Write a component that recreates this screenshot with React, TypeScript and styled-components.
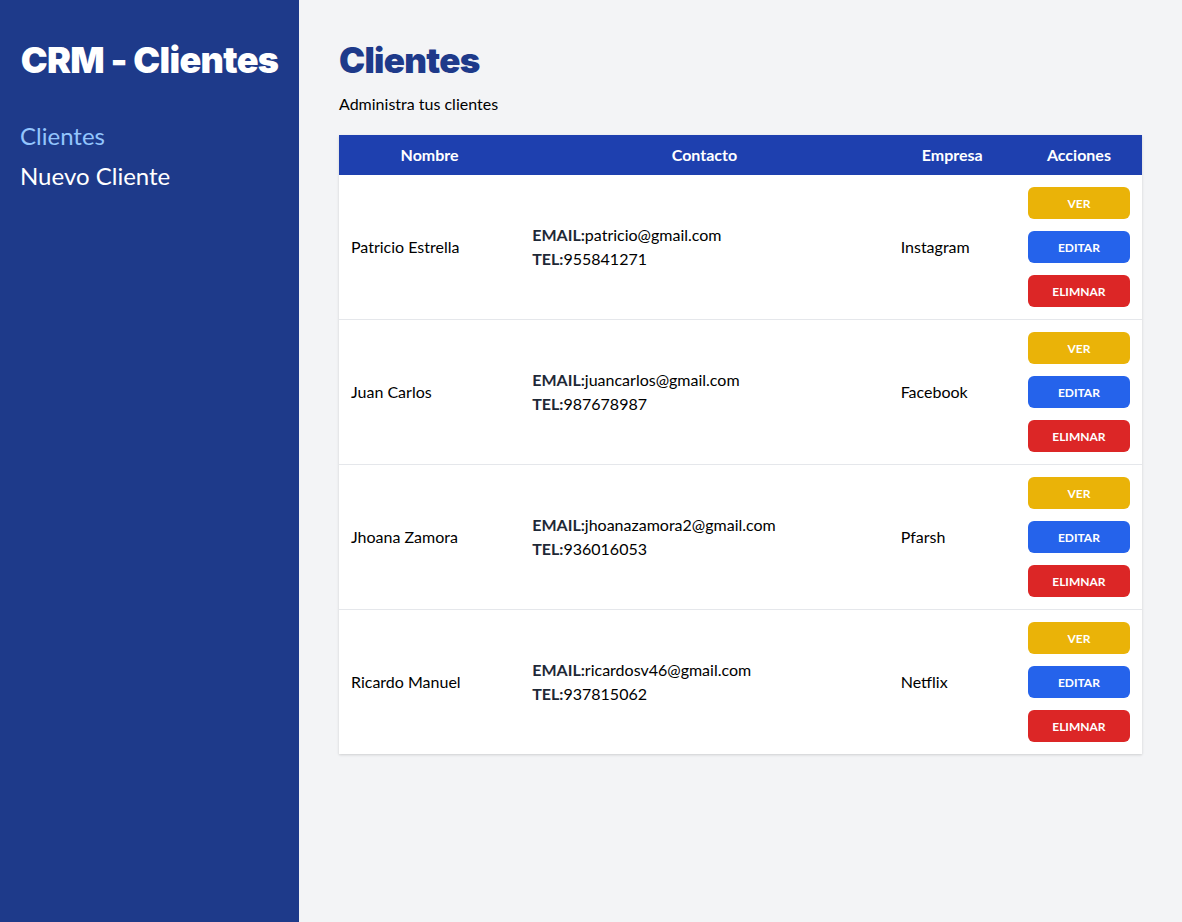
import React from "react";
import styled, { createGlobalStyle } from "styled-components";

const GlobalStyle = createGlobalStyle`
  * { box-sizing: border-box; }
  html, body { margin: 0; padding: 0; }
  body {
    font-family: Lato, "Noto Sans", "Liberation Sans", sans-serif;
    color: #000;
    background: #f3f4f6;
  }
`;

const Layout = styled.div`
  display: flex;
  min-height: 100vh;
`;

const Sidebar = styled.aside`
  width: 299px;
  flex-shrink: 0;
  background: #1e3a8a;
  padding: 40px 20px;
`;

const Brand = styled.h2`
  margin: 0;
  font-family: Inter, Lato, sans-serif;
  font-size: 36px;
  line-height: 40px;
  font-weight: 900;
  letter-spacing: -0.7px;
  color: #fff;
  text-align: center;
  white-space: nowrap;
`;

const Nav = styled.nav`
  margin-top: 40px;
  display: flex;
  flex-direction: column;
  gap: 8px;
`;

const NavLink = styled.a<{ $active?: boolean }>`
  display: block;
  font-size: 24px;
  line-height: 32px;
  color: ${(p) => (p.$active ? "#93c5fd" : "#fff")};
  text-decoration: none;
`;

const Main = styled.main`
  flex: 1;
  padding: 40px;
  background: #f3f4f6;
`;

const Title = styled.h1`
  margin: 0;
  font-family: Inter, Lato, sans-serif;
  font-size: 35px;
  line-height: 40px;
  font-weight: 900;
  letter-spacing: -0.7px;
  color: #1e3a8a;
`;

const Subtitle = styled.p`
  margin: 12px 0 0;
  font-size: 16px;
  line-height: 24px;
`;

const Table = styled.table`
  width: 100%;
  margin-top: 19px;
  border-collapse: collapse;
  background: #fff;
  box-shadow: 0 1px 3px rgba(0, 0, 0, 0.1), 0 1px 2px rgba(0, 0, 0, 0.06);
  table-layout: fixed;
`;

const HeadRow = styled.tr`
  background: #1e40af;
  color: #fff;
`;

const Th = styled.th<{ $w: number }>`
  width: ${(p) => p.$w}px;
  padding: 8px;
  font-size: 16px;
  line-height: 24px;
  font-weight: 700;
  text-align: center;
`;

const Row = styled.tr`
  border-bottom: 1px solid #e5e7eb;
  &:last-child { border-bottom: none; }
`;

const Td = styled.td`
  padding: 12px;
  font-size: 16px;
  line-height: 24px;
  vertical-align: middle;
`;

const Label = styled.span`
  font-weight: 700;
  color: #1f2937;
`;

const Line = styled.p`
  margin: 0;
`;

const Actions = styled.div`
  display: flex;
  flex-direction: column;
  gap: 12px;
`;

const Button = styled.button<{ $bg: string }>`
  display: block;
  width: 100%;
  height: 32px;
  border: none;
  border-radius: 6px;
  background: ${(p) => p.$bg};
  color: #fff;
  font-family: inherit;
  font-size: 12px;
  font-weight: 700;
  text-transform: uppercase;
  cursor: pointer;
`;

const clientes = [
  { nombre: "Patricio Estrella", email: "patricio@gmail.com", tel: "955841271", empresa: "Instagram" },
  { nombre: "Juan Carlos", email: "juancarlos@gmail.com", tel: "987678987", empresa: "Facebook" },
  { nombre: "Jhoana Zamora", email: "jhoanazamora2@gmail.com", tel: "936016053", empresa: "Pfarsh" },
  { nombre: "Ricardo Manuel", email: "ricardosv46@gmail.com", tel: "937815062", empresa: "Netflix" },
];

export default function App() {
  return (
    <>
      <GlobalStyle />
      <Layout>
        <Sidebar>
          <Brand>CRM - Clientes</Brand>
          <Nav>
            <NavLink $active href="#">Clientes</NavLink>
            <NavLink href="#">Nuevo Cliente</NavLink>
          </Nav>
        </Sidebar>
        <Main>
          <Title>Clientes</Title>
          <Subtitle>Administra tus clientes</Subtitle>
          <Table>
            <thead>
              <HeadRow>
                <Th $w={181}>Nombre</Th>
                <Th $w={368}>Contacto</Th>
                <Th $w={127}>Empresa</Th>
                <Th $w={126}>Acciones</Th>
              </HeadRow>
            </thead>
            <tbody>
              {clientes.map((c) => (
                <Row key={c.email}>
                  <Td>{c.nombre}</Td>
                  <Td>
                    <Line><Label>EMAIL:</Label>{c.email}</Line>
                    <Line><Label>TEL:</Label>{c.tel}</Line>
                  </Td>
                  <Td>{c.empresa}</Td>
                  <Td>
                    <Actions>
                      <Button $bg="#eab308">Ver</Button>
                      <Button $bg="#2563eb">Editar</Button>
                      <Button $bg="#dc2626">Elimnar</Button>
                    </Actions>
                  </Td>
                </Row>
              ))}
            </tbody>
          </Table>
        </Main>
      </Layout>
    </>
  );
}
